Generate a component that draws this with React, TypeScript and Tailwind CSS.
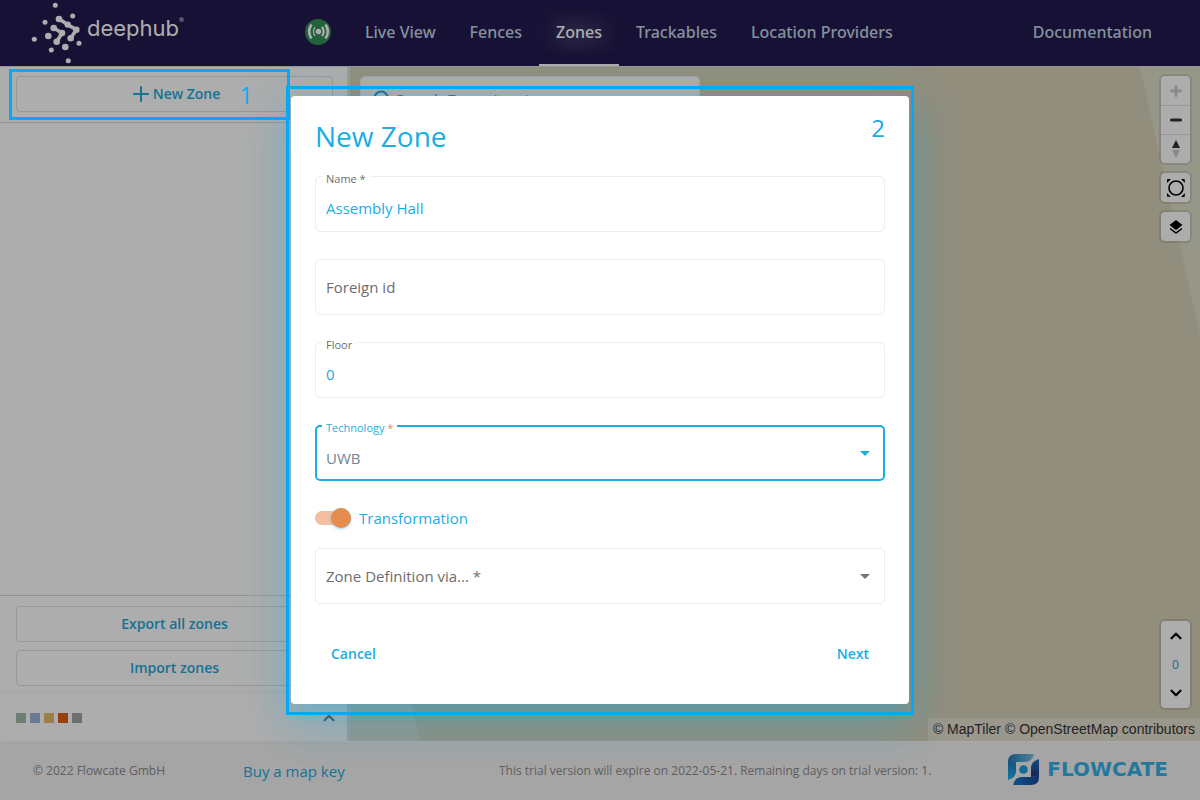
import React from "react";
import { ChevronDown, ChevronUp, Plus, Search } from "lucide-react";

const navItems = ["Live View", "Fences", "Zones", "Trackables", "Location Providers"];
const legendColors = ["bg-[#9dbdab]", "bg-[#9fb0d8]", "bg-[#e6ba68]", "bg-[#e25f12]", "bg-[#a3a3a3]"];

function DeephubLogo() {
  return (
    <a href="#home" aria-label="deephub" className="flex items-start text-white">
      <svg viewBox="31 2 52 62" className="h-[62px] w-[52px]" fill="currentColor" aria-hidden="true">
        <circle cx="55.3" cy="5.3" r="2.5" />
        <circle cx="72.7" cy="16" r="2.5" />
        <circle cx="45" cy="22.3" r="2.5" />
        <circle cx="34.3" cy="39.3" r="2.5" />
        <circle cx="51.3" cy="50" r="2.5" />
        <circle cx="68.3" cy="60.7" r="2.5" />
        <circle cx="79" cy="43.3" r="2.5" />
        <circle cx="48.3" cy="36" r="3.3" />
        <circle cx="65.3" cy="47" r="3.3" />
        <circle cx="59" cy="19" r="3.3" />
        <circle cx="67.7" cy="24.6" r="3.2" />
        <circle cx="76.3" cy="29.7" r="3.3" />
        <circle cx="70.7" cy="38.3" r="3.3" />
        <circle cx="53.7" cy="28" r="3.3" />
        <circle cx="62" cy="33" r="3.3" />
        <circle cx="56.7" cy="41.7" r="3.3" />
        <path
          d="M59 19 67.7 24.6 76.3 29.7 70.7 38.3M53.7 28 62 33 56.7 41.7"
          fill="none"
          stroke="currentColor"
          strokeWidth="3.6"
          strokeLinejoin="round"
        />
      </svg>
      <span className="ml-1 mt-2 font-['Inter'] text-[22px] leading-[36px] font-normal">deephub</span>
      <span className="mt-[14px] text-[6px] leading-[8px]">®</span>
    </a>
  );
}

function FlowcateLogo() {
  return (
    <a href="#flowcate" aria-label="Flowcate" className="flex items-center gap-2 pb-1">
      <svg viewBox="0 0 31 31" className="h-[31px] w-[31px]" aria-hidden="true">
        <defs>
          <linearGradient id="fcTop"><stop offset="0" stopColor="#2277b8" /><stop offset="1" stopColor="#78c4e6" /></linearGradient>
          <linearGradient id="fcLeft" x2="0" y2="1"><stop offset="0" stopColor="#1c7cc0" /><stop offset="1" stopColor="#1cb0ea" /></linearGradient>
          <linearGradient id="fcRight" x2="0" y2="1"><stop offset="0" stopColor="#2470c4" /><stop offset="1" stopColor="#1b3476" /></linearGradient>
          <linearGradient id="fcBottom"><stop offset="0" stopColor="#1a78c8" /><stop offset="1" stopColor="#164a9c" /></linearGradient>
        </defs>
        <path d="M0 8Q0 0 8 0H26Q24 8 17 8H8Q3 8 0 12Z" fill="url(#fcTop)" />
        <path d="M0 11Q3 8 8 8V18Q8 23 0 26Z" fill="url(#fcLeft)" />
        <path d="M31 5V20Q28 23 23 23V13Q23 8 31 5Z" fill="url(#fcRight)" />
        <path d="M5 31Q7 23 14 23H23Q28 23 31 19V23Q31 31 23 31Z" fill="url(#fcBottom)" />
        <circle cx="15.5" cy="15.5" r="4.3" fill="#1c9edc" />
      </svg>
      <span className="font-['DejaVu_Sans'] text-xl leading-6 font-bold text-[#35b2e8]">FLOWCATE</span>
    </a>
  );
}

function StatusIcon() {
  return (
    <svg viewBox="0 0 26 26" className="mb-[2px] h-[26px] w-[26px]" role="img" aria-label="Connected">
      <circle cx="13" cy="13" r="13" fill="#2f9158" />
      <circle cx="13.5" cy="12.5" r="2.7" fill="#fff" />
      <g fill="none" stroke="#fff">
        <path d="M6.5 5.5Q1.8 12.5 6.5 19.5M20.5 5.5Q25.2 12.5 20.5 19.5" strokeWidth="2.6" />
        <path d="M17 7.8Q20.2 12.5 17 17.2" strokeWidth="2.2" />
        <path d="M10 8.2Q7 12.5 10 16.8" strokeWidth="1.2" />
      </g>
    </svg>
  );
}

function MapControls() {
  const group = "flex w-[29px] flex-col rounded-[4px] bg-white shadow-[0_0_0_2px_rgba(0,0,0,0.1)]";
  const key = "flex h-[29px] items-center justify-center";
  return (
    <div className="absolute top-[9px] right-[10px] flex flex-col gap-[10px]">
      <div className={group}>
        <button aria-label="Zoom in" className={key}>
          <svg viewBox="0 0 12 12" className="size-3" stroke="#cbcbcb" strokeWidth="3" strokeLinecap="round"><path d="M1.5 6h9M6 1.5v9" /></svg>
        </button>
        <button aria-label="Zoom out" className={`${key} border-t border-[#ddd]`}>
          <svg viewBox="0 0 12 12" className="size-3" stroke="#333" strokeWidth="3" strokeLinecap="round"><path d="M1.5 6h9" /></svg>
        </button>
        <button aria-label="Reset bearing" className={`${key} border-t border-[#ddd]`}>
          <svg viewBox="0 0 8 18" className="h-[18px] w-2"><path d="M4 0 8 8H0z" fill="#333" /><path d="M4 18 8 10H0z" fill="#ccc" /></svg>
        </button>
      </div>
      <div className={group}>
        <button aria-label="Fit to zones" className={key}>
          <svg viewBox="0 0 18 18" className="size-[18px]" fill="none" stroke="#000">
            <circle cx="9" cy="9" r="7" strokeWidth="1.6" />
            <path d="M.5 0H4L0 4V.5zM14 0h3.5L18 4zM0 14v3.5L4 18zM18 14l-4 4h3.5z" fill="#000" stroke="none" />
          </svg>
        </button>
      </div>
      <div className={group}>
        <button aria-label="Layers" className={key}>
          <svg viewBox="0 0 14 14" className="size-[14px]">
            <path d="M7 0 13.5 5 7 10 .5 5z" />
            <path d="M1 8.5 7 13 13 8.5" fill="none" stroke="#000" strokeWidth="1.5" />
          </svg>
        </button>
      </div>
    </div>
  );
}

function Caret({ className }: { className: string }) {
  return (
    <svg viewBox="0 0 10 5" aria-hidden="true" className={`pointer-events-none absolute right-[15px] top-[26px] h-[5px] w-[10px] ${className}`}>
      <path d="M0 0h10L5 5z" fill="currentColor" />
    </svg>
  );
}

const fieldBox = "h-14 w-full appearance-none rounded-[5px] border border-[#eeeef0] bg-white px-[10px] pt-2 text-[15px] text-[#19aee4] outline-none";
const floatLabel = "absolute -top-1 left-[7px] bg-white px-1 text-[11px] leading-[14px]";
const restLabel = "pointer-events-none absolute top-[18px] left-[11px] text-[15px] leading-5 text-[#6d6d6d]";
const sideButton = "flex h-9 w-full items-center justify-center rounded border border-[#dfdfdf] text-sm font-semibold text-[#1ea8db]";

function ZoneDialog() {
  return (
    <div
      role="dialog"
      aria-labelledby="dialog-title"
      className="relative w-[618px] max-w-full rounded bg-white px-6 pt-6 pb-8 text-[#19aee4] shadow-[0_11px_15px_-7px_rgba(25,174,228,0.2),0_24px_38px_3px_rgba(25,174,228,0.14),0_9px_46px_8px_rgba(25,174,228,0.2)]"
    >
      <div className="pointer-events-none absolute -inset-x-[5px] -top-[10px] -bottom-[11px] border-3 border-[#03a9f4]" />
      <div className="flex items-start justify-between">
        <h2 id="dialog-title" className="text-[28px] leading-8">New Zone</h2>
        <span className="-mt-2 text-2xl leading-8 text-[#19a8ee]">2</span>
      </div>
      <form className="mt-6">
        <div className="flex flex-col gap-[27px]">
          <div className="relative">
            <input id="name" defaultValue="Assembly Hall" className={fieldBox} />
            <label htmlFor="name" className={`${floatLabel} text-[#6d6d6d]`}>Name *</label>
          </div>
          <div className="relative">
            <input id="foreign" className={fieldBox} />
            <label htmlFor="foreign" className={restLabel}>Foreign id</label>
          </div>
          <div className="relative">
            <input id="floor" defaultValue="0" className={fieldBox} />
            <label htmlFor="floor" className={`${floatLabel} text-[#6d6d6d]`}>Floor</label>
          </div>
          <div className="relative">
            <select id="technology" className="h-14 w-full appearance-none rounded-[5px] border-2 border-[#19aee4] bg-white px-[9px] pt-[10px] text-[15px] text-[#71839a] outline-none">
              <option>UWB</option>
            </select>
            <label htmlFor="technology" className={floatLabel}>Technology <span className="text-[#e58c50]">*</span></label>
            <Caret className="text-[#19aee4]" />
          </div>
        </div>
        <label className="mt-[27px] flex h-5 items-center gap-2 text-[15px]">
          <input type="checkbox" role="switch" defaultChecked className="peer sr-only" />
          <span className="flex h-[14px] w-9 items-center justify-end rounded-full bg-[#f2c0a0]">
            <span className="size-5 rounded-full bg-[#e58c50] shadow-[0_1px_3px_rgba(25,174,228,0.5)]" />
          </span>
          Transformation
        </label>
        <div className="relative mt-5">
          <select id="definition" defaultValue="" className={fieldBox}>
            <option value="" />
          </select>
          <label htmlFor="definition" className={restLabel}>Zone Definition via... *</label>
          <Caret className="text-[#757575]" />
        </div>
        <div className="mt-8 flex justify-between px-4 text-sm leading-9 font-semibold">
          <button type="button">Cancel</button>
          <button type="button">Next</button>
        </div>
      </form>
    </div>
  );
}

export default function App() {
  return (
    <div className="relative flex min-h-screen flex-col bg-[#f3f3f3] font-['Open_Sans','Noto_Sans',sans-serif]">
      <header className="flex h-[66px] items-center bg-[#231a4f] pr-[31px] pl-[31px]">
        <div className="flex w-[274px] shrink-0 items-center">
          <DeephubLogo />
        </div>
        <StatusIcon />
        <nav className="ml-[17px] flex h-full flex-1 font-['Noto_Sans'] text-base font-medium text-[#c3d6e3]">
          {navItems.map((item) => (
            <a
              key={item}
              href="#nav"
              className={
                item === "Zones"
                  ? "flex items-center border-b-2 border-white px-[17px] text-white [text-shadow:0_0_24px_#fff]"
                  : "flex items-center px-[17px] pb-[2px]"
              }
            >
              {item}
            </a>
          ))}
          <a href="#docs" className="ml-auto flex items-center px-[17px] pb-[2px]">Documentation</a>
        </nav>
      </header>

      <main className="flex flex-1 border-t border-[#dcdce0]">
        <aside className="flex w-[350px] shrink-0 flex-col border-r-3 border-[#e4e4e4] bg-white">
          <div className="border-b border-[#dadada] pt-[9px] pr-[14px] pb-[10px] pl-4">
            <button className={sideButton}>
              <Plus size={24} strokeWidth={2} />
              New Zone
            </button>
          </div>
          <div className="flex-1" />
          <div className="flex flex-col gap-2 border-t border-[#dadada] pt-[10px] pr-[14px] pb-[7px] pl-4">
            <button className={sideButton}>Export all zones</button>
            <button className={sideButton}>Import zones</button>
          </div>
          <div className="flex h-12 items-center justify-between rounded-md pt-[2px] pr-[9px] pl-4 shadow-[0_0_4px_rgba(0,0,0,0.08)]">
            <div className="flex gap-1">
              {legendColors.map((color) => <span key={color} className={`size-[10px] ${color}`} />)}
            </div>
            <button aria-label="Expand legend"><ChevronUp size={18} color="#66747c" strokeWidth={2.6} /></button>
          </div>
        </aside>

        <section aria-label="Map" className="relative flex-1 overflow-hidden bg-[#d8d2b9]">
          <svg viewBox="0 0 60 268" className="absolute top-0 right-0 h-[268px] w-[60px]" aria-hidden="true"><path d="M0 0H60V268z" fill="#dedecb" /></svg>
          <svg viewBox="0 0 70 300" className="absolute bottom-0 left-0 h-[300px] w-[70px]" aria-hidden="true"><path d="M0 0 70 300H0z" fill="#dedecb" /></svg>
          <label className="absolute top-[9px] left-[10px] flex h-[46px] w-[340px] items-center gap-1 rounded-[5px] border border-[#eee] bg-white pl-[11px] text-[15px]">
            <Search size={20} color="#19aee4" strokeWidth={2.6} className="shrink-0" />
            <input aria-label="Search zones" placeholder="Search Zones input" className="w-full outline-none placeholder:text-[#8c8c8c]" />
          </label>
          <MapControls />
          <div className="absolute right-[10px] bottom-[33px] flex h-[87px] w-[29px] flex-col items-center justify-between rounded-[4px] bg-white py-[6px] shadow-[0_0_0_2px_rgba(0,0,0,0.1)]">
            <button aria-label="Floor up"><ChevronUp size={18} strokeWidth={3} /></button>
            <span className="text-[12px] leading-4 text-[#19a0d0]">0</span>
            <button aria-label="Floor down"><ChevronDown size={18} strokeWidth={3} /></button>
          </div>
          <p className="absolute right-0 bottom-0 bg-white/30 px-[5px] font-['Liberation_Sans'] text-[14px] leading-[23px] text-[#333]">
            © MapTiler © OpenStreetMap contributors
          </p>
        </section>
      </main>

      <footer className="flex h-[59px] items-center border-t border-[#fafafa] pr-8 pl-[33px] text-[12px] text-[#8c8c8c]">
        <span className="w-[210px]">© 2022 Flowcate GmbH</span>
        <a href="#map-key" className="w-64 text-[15px] text-[#1ea8db]">Buy a map key</a>
        <span className="flex-1">This trial version will expire on 2022-05-21. Remaining days on trial version: 1.</span>
        <FlowcateLogo />
      </footer>

      <div className="absolute inset-0 flex items-center justify-center overflow-hidden bg-black/32">
        <ZoneDialog />
      </div>
      <div className="pointer-events-none absolute top-[69px] left-[9px] flex h-[51px] w-[281px] items-center justify-end border-3 border-[#03a9f4] pr-[34px] text-2xl text-[#19a8ee]">
        1
      </div>
    </div>
  );
}
